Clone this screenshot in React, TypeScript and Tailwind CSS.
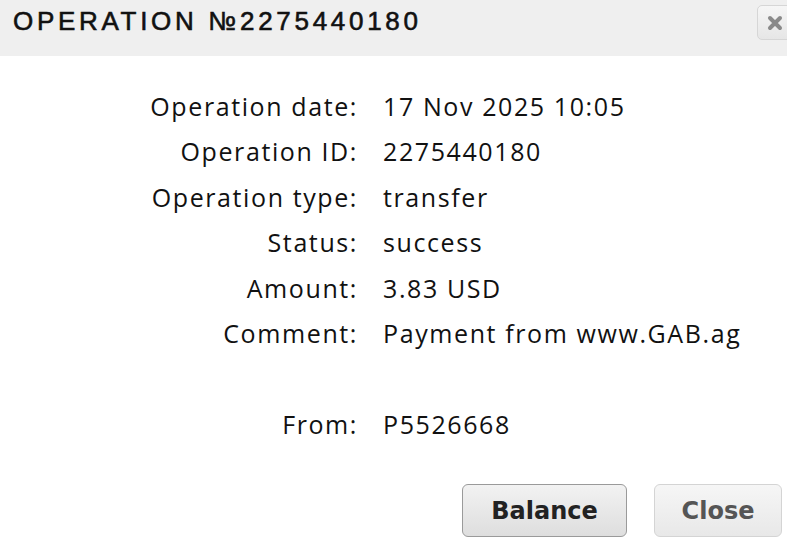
import React from 'react'

const rows: Array<[string, string] | null> = [
  ['Operation date:', '17 Nov 2025 10:05'],
  ['Operation ID:', '2275440180'],
  ['Operation type:', 'transfer'],
  ['Status:', 'success'],
  ['Amount:', '3.83 USD'],
  ['Comment:', 'Payment from www.GAB.ag'],
  null,
  ['From:', 'P5526668'],
]

export default function App() {
  return (
    <div className="w-[787px] h-[552px] overflow-hidden bg-white">
      {/* header */}
      <div className="h-[56px] bg-[#efefef] flex items-start justify-between">
        <h1 className="pl-[13px] pt-[6px] text-[26px] leading-[30px] tracking-[3.7px] text-[#111] font-['Liberation_Sans',sans-serif] [-webkit-text-stroke:0.6px_#111]">
          OPERATION №2275440180
        </h1>
        <button className="mt-[5px] -mr-[10px] w-[40px] h-[35px] rounded-[5px] border border-[#d6d6d6] bg-gradient-to-b from-[#f6f6f6] to-[#e6e6e6] flex items-center pl-[9px]">
          <svg width="16" height="16" viewBox="0 0 16 16">
            <path d="M3 3 L13 13 M13 3 L3 13" stroke="#8a8a8a" strokeWidth="4" strokeLinecap="round" />
          </svg>
        </button>
      </div>

      {/* details */}
      <div className="pt-[28px] font-['Open_Sans',sans-serif] font-medium text-[25px] tracking-[1.6px] text-[#111]">
        {rows.map((r, i) =>
          r ? (
            <div key={i} className="flex h-[45.4px] items-center">
              <div className="w-[358px] text-right">{r[0]}</div>
              <div className="pl-[25px]">{r[1]}</div>
            </div>
          ) : (
            <div key={i} className="h-[45.4px]" />
          )
        )}
      </div>

      {/* buttons */}
      <div className="mt-[37px] flex font-['DejaVu_Sans',sans-serif] font-bold text-[24px]">
        <button className="ml-[462px] w-[165px] h-[53px] rounded-[6px] border border-[#9a9a9a] bg-gradient-to-b from-[#f2f2f2] to-[#dedede] text-[#222]">
          Balance
        </button>
        <button className="ml-[27px] w-[128px] h-[53px] rounded-[6px] border border-[#d4d4d4] bg-gradient-to-b from-[#f6f6f6] to-[#e8e8e8] text-[#555]">
          Close
        </button>
      </div>
    </div>
  )
}
